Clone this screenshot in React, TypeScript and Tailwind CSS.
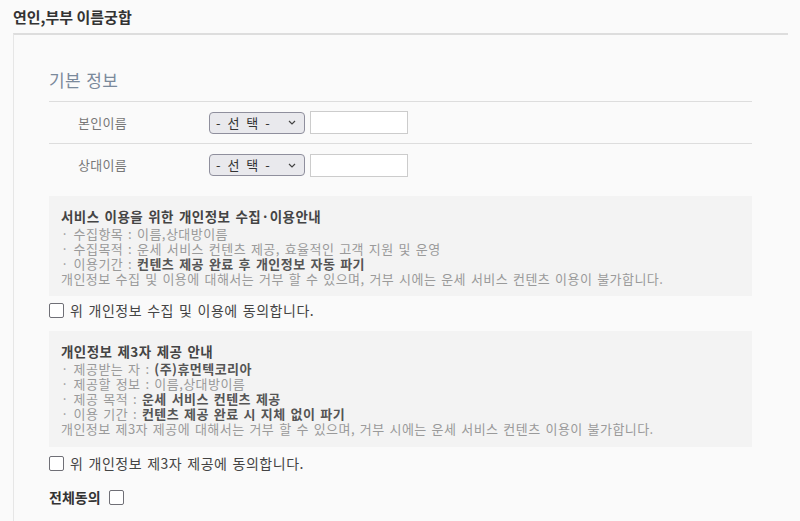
import React from "react";

const KR = "font-['Noto_Sans_CJK_KR','Noto_Sans',sans-serif]";

function Checkbox() {
  return <span className="inline-block h-[15px] w-[15px] shrink-0 rounded-[2px] border-[1.5px] border-[#6f6f76] bg-white" />;
}

function SelectBox() {
  return (
    <div className="flex h-[22px] w-[96px] items-center justify-between rounded-[4px] border border-[#8f8f9d] bg-[#e9e9ed] pl-[6px] pr-[8px] text-[13px] text-[#333]">
      <span className="tracking-[2px]">- 선 택 -</span>
      <svg width="8" height="5" viewBox="0 0 8 5" fill="none">
        <path d="M1 1l3 3l3-3" stroke="#444" strokeWidth="1.2" />
      </svg>
    </div>
  );
}

function NameRow({ label, last }: { label: string; last?: boolean }) {
  return (
    <div className={`flex h-[42px] items-center ${last ? "" : "border-b border-[#dddddd]"}`}>
      <div className="w-[160px] pl-[29px] text-[13px] tracking-[0.3px] text-[#777]">{label}</div>
      <SelectBox />
      <div className="ml-[5px] h-[23px] w-[98px] border border-[#cccccc] bg-white" />
    </div>
  );
}

export default function App() {
  return (
    <div className={`min-h-[521px] w-[800px] bg-[#fafafa] ${KR}`}>
      <h1 className="px-[13px] pt-[7px] text-[15px] font-bold leading-[20px] text-[#333]">연인,부부 이름궁합</h1>
      <div className="ml-[13px] mt-[6px] w-[775px] border-l border-t-2 border-l-[#e6e6e6] border-t-[#dddddd] px-[35px] pt-[34px] pb-[20px]">
        <h2 className="pb-[10px] text-[17px] leading-[22px] tracking-[0.4px] [word-spacing:1px] text-[#7a899b]">기본 정보</h2>
        <div className="w-[703px] border-t border-[#dddddd]">
          <NameRow label="본인이름" />
          <NameRow label="상대이름" last />
        </div>

        <div className="mt-[10px] w-[703px] bg-[#f3f3f3] px-[12px] pt-[12px] pb-[10px] text-[13px] leading-[15px] tracking-[0.45px] [word-spacing:1.5px] text-[#9a9a9a]">
          <p className="pb-[1px] text-[13.5px] font-bold leading-[17px] text-[#444]">서비스 이용을 위한 개인정보 수집·이용안내</p>
          <p>· 수집항목 : 이름,상대방이름</p>
          <p>· 수집목적 : 운세 서비스 컨텐츠 제공, 효율적인 고객 지원 및 운영</p>
          <p>· 이용기간 : <b className="text-[#555]">컨텐츠 제공 완료 후 개인정보 자동 파기</b></p>
          <p>개인정보 수집 및 이용에 대해서는 거부 할 수 있으며, 거부 시에는 운세 서비스 컨텐츠 이용이 불가합니다.</p>
        </div>
        <label className="mt-[6px] flex items-center gap-[6px] text-[14px] leading-[16px] tracking-[0.5px] [word-spacing:1.5px] text-[#444]">
          <Checkbox />
          <span>위 개인정보 수집 및 이용에 동의합니다.</span>
        </label>

        <div className="mt-[13px] w-[703px] bg-[#f3f3f3] px-[12px] pt-[12px] pb-[11px] text-[13px] leading-[15px] tracking-[0.45px] [word-spacing:1.5px] text-[#9a9a9a]">
          <p className="pb-[1px] text-[13.5px] font-bold leading-[17px] text-[#444]">개인정보 제3자 제공 안내</p>
          <p>· 제공받는 자 : <b className="text-[#555]">(주)휴먼텍코리아</b></p>
          <p>· 제공할 정보 : 이름,상대방이름</p>
          <p>· 제공 목적 : <b className="text-[#555]">운세 서비스 컨텐츠 제공</b></p>
          <p>· 이용 기간 : <b className="text-[#555]">컨텐츠 제공 완료 시 지체 없이 파기</b></p>
          <p>개인정보 제3자 제공에 대해서는 거부 할 수 있으며, 거부 시에는 운세 서비스 컨텐츠 이용이 불가합니다.</p>
        </div>
        <label className="mt-[8px] flex items-center gap-[6px] text-[14px] leading-[16px] tracking-[0.5px] [word-spacing:1.5px] text-[#444]">
          <Checkbox />
          <span>위 개인정보 제3자 제공에 동의합니다.</span>
        </label>

        <div className="mt-[18px] flex items-center gap-[8px]">
          <span className="text-[14px] font-bold leading-[16px] text-[#333]">전체동의</span>
          <Checkbox />
        </div>
      </div>
    </div>
  );
}
